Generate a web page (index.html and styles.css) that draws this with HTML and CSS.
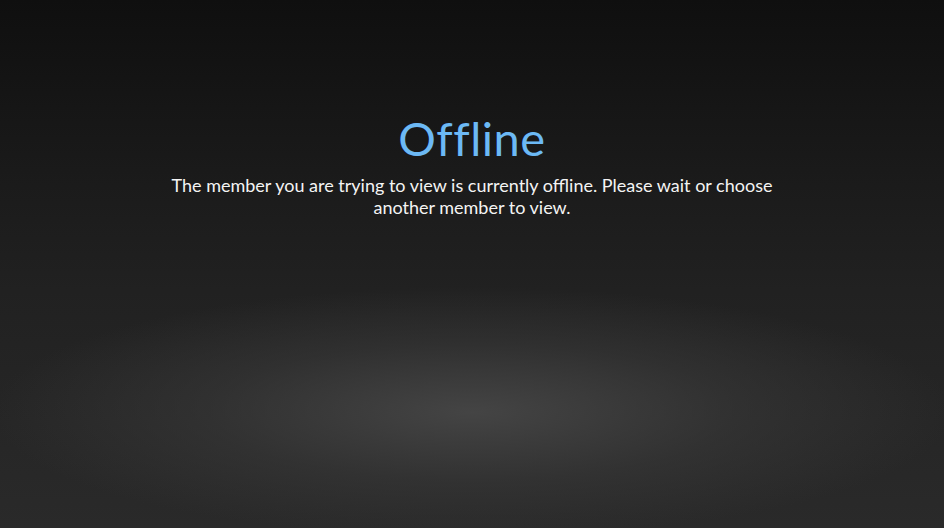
FILE: index.html
```html
<!DOCTYPE html>
<html lang="en">
<head>
    <meta charset="UTF-8">
    <meta name="viewport" content="width=device-width, initial-scale=1.0">
    <link rel="stylesheet" href="styles.css">
    <title>Offline</title>
</head>
<body>
  <div class="stage">
    <div class="offline-box">
      <h1 class="offline-title">Offline</h1>
      <p class="offline-text">The member you are trying to view is currently offline. Please wait or choose another member to view.</p>
    </div>
  </div>
</body>
</html>
```

FILE: styles.css
```css
html, body {
  margin: 0;
  height: 100%;
}

body {
  font-family: "Lato", "Open Sans", sans-serif;
  background-color: #1c1c1c;
}

/* Dark stage with the soft spotlight near the floor */
.stage {
  min-height: 100%;
  background:
    radial-gradient(ellipse 480px 125px at 50% 412px, rgba(70, 70, 70, 0.95), rgba(58, 58, 58, 0.55) 55%, rgba(40, 40, 40, 0) 100%),
    linear-gradient(to bottom, #0f0f0f 0%, #1b1b1b 35%, #212121 55%, #2a2a2a 100%);
  display: flex;
  justify-content: center;
}

.offline-box {
  width: 640px;
  padding-top: 110px;
  text-align: center;
}

.offline-title {
  margin: 0;
  font-size: 47px;
  font-weight: 400;
  line-height: 56px;
  letter-spacing: 0.5px;
  color: #6cb9f5;
}

.offline-text {
  margin: 8px 0 0;
  font-size: 18px;
  line-height: 22px;
  color: #f4f4f4;
}
```
